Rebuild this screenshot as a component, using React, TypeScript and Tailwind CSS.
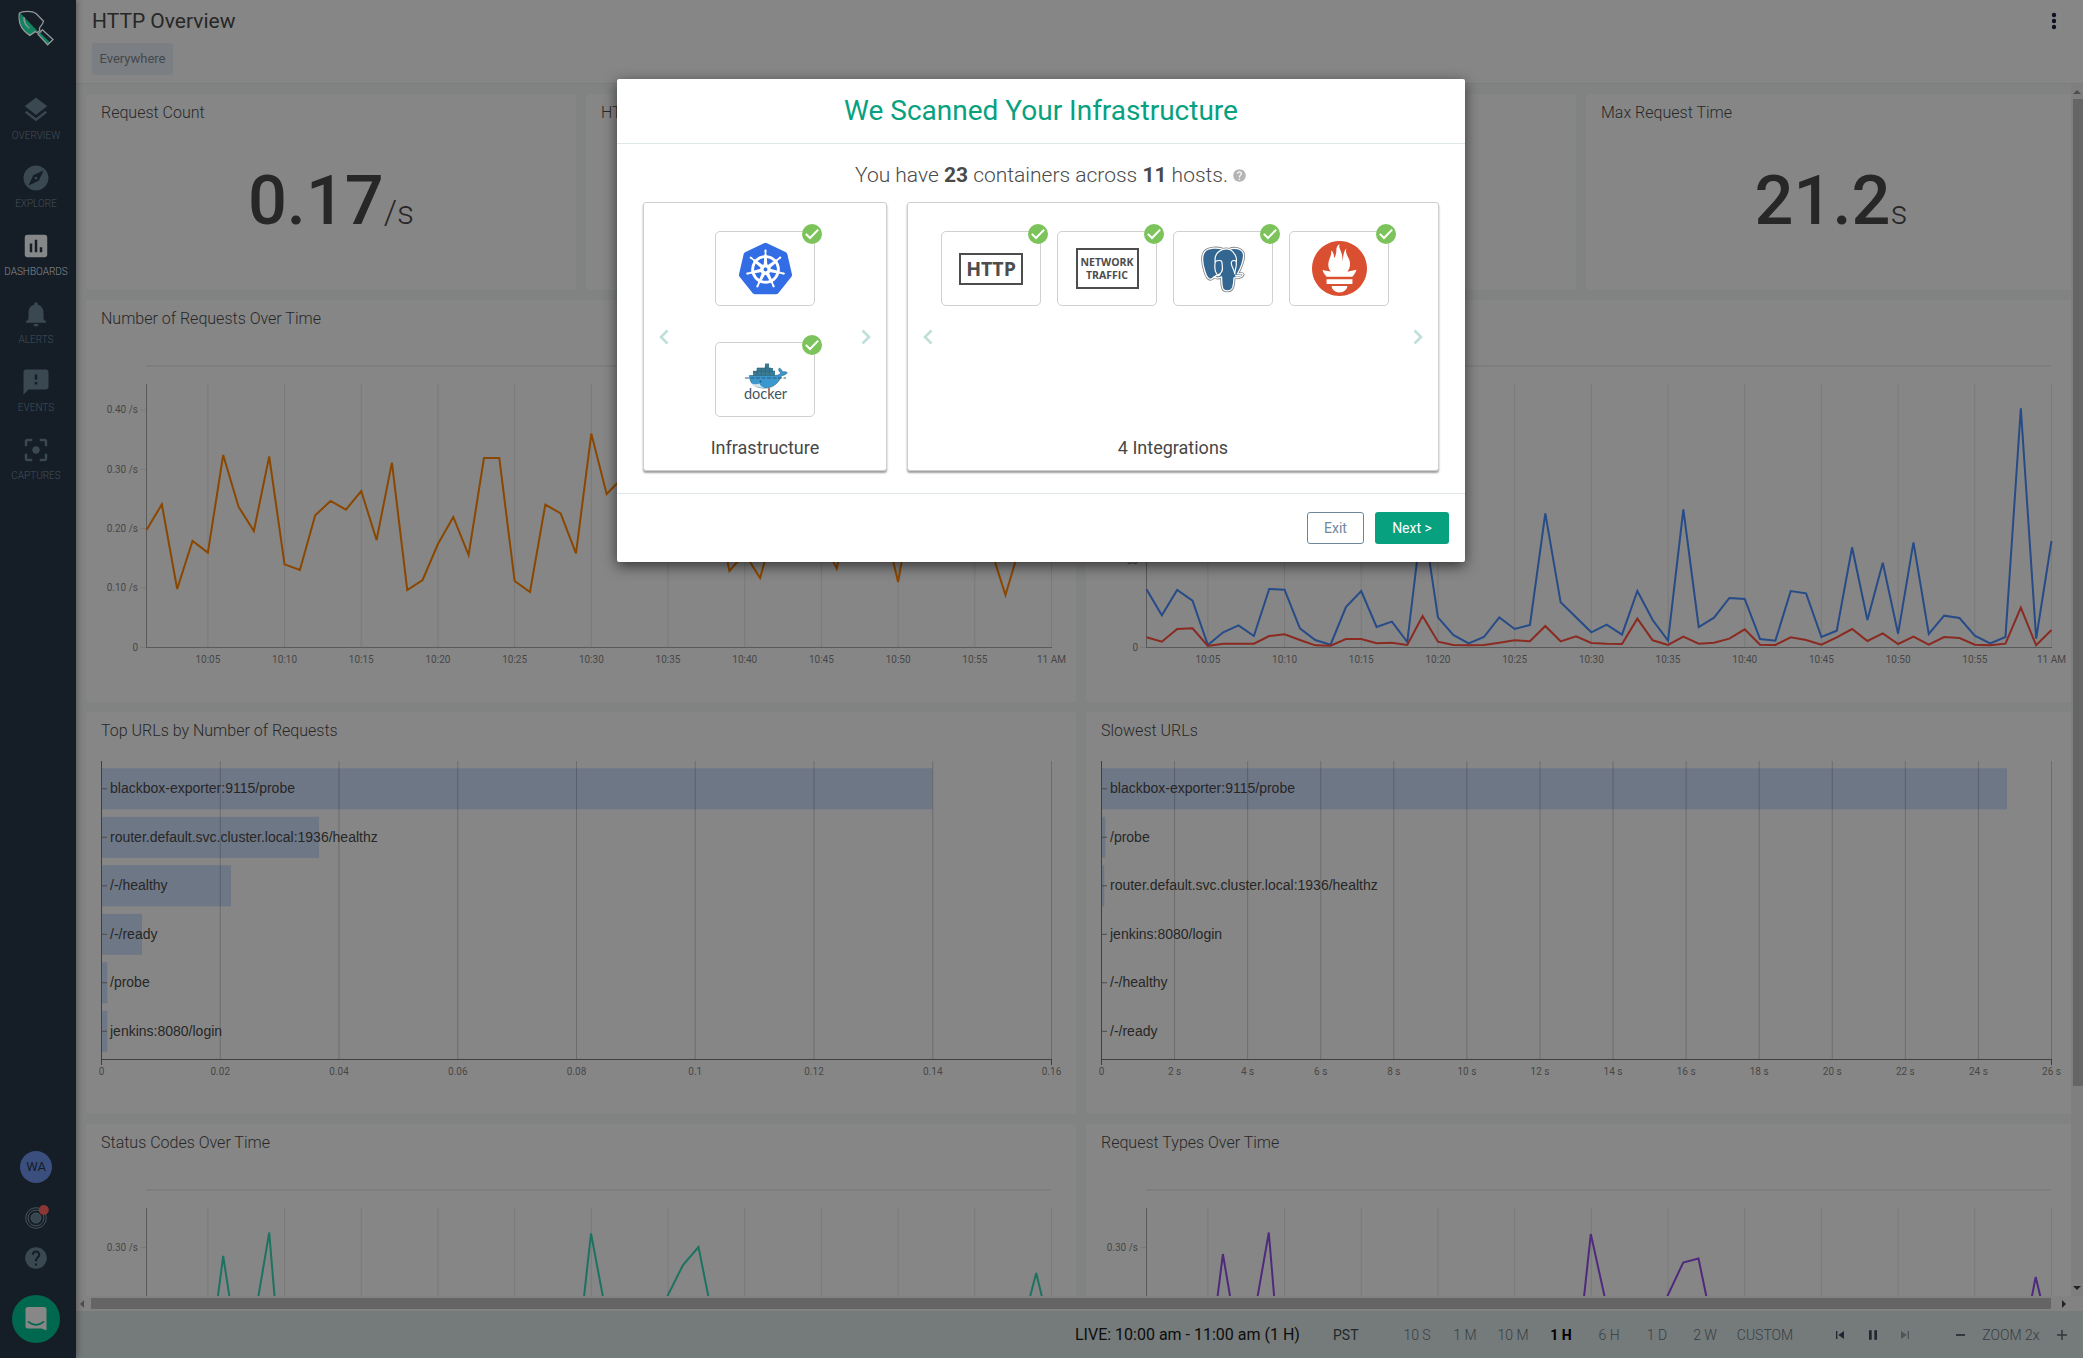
import React from "react";
import {
  MdLayers,
  MdExplore,
  MdAssessment,
  MdNotifications,
  MdFeedback,
  MdFilterCenterFocus,
  MdHelp,
  MdSkipPrevious,
  MdPause,
  MdSkipNext,
} from "react-icons/md";
import { SiKubernetes, SiPrometheus } from "react-icons/si";

/* ---------- chart data (vertical pixel positions inside a card) ---------- */

const STEP = 905 / 59;
const AXIS_X = 60.5;

const requests = [
  540, 463, 717, 573, 608, 315, 470, 543, 319, 643, 660, 496, 453, 479, 423, 570, 338, 720, 690, 582, 501, 615, 324,
  324, 693, 726, 464, 490, 610, 251, 432, 385, 420, 390, 460, 410, 480, 430, 663, 610, 684, 520, 450, 480, 560, 656,
  440, 470, 500, 696, 430, 470, 420, 480, 500, 590, 735, 580, 480, 450,
].map((v) => 50 + v / 3);

const maxTime = [
  718, 796, 720, 752, 885, 847, 826, 858, 717, 719, 835, 870, 884, 771, 723, 831, 815, 876, 493, 802, 855, 880, 861,
  802, 837, 825, 490, 757, 802, 847, 824, 854, 723, 810, 872, 478, 831, 803, 744, 747, 867, 872, 723, 730, 861, 842,
  592, 810, 638, 851, 577, 852, 797, 804, 857, 880, 861, 175, 866, 573,
].map((v) => 50 + v / 3);

const avgTime = [
  862, 875, 837, 835, 888, 881, 881, 881, 858, 853, 870, 886, 887, 867, 867, 880, 878, 885, 798, 875, 885, 886, 885,
  878, 871, 874, 828, 874, 859, 879, 881, 882, 806, 871, 885, 860, 881, 878, 866, 838, 884, 885, 862, 870, 884, 862,
  837, 873, 850, 882, 860, 884, 861, 864, 884, 886, 881, 773, 886, 840,
].map((v) => 50 + v / 3);

const toPoints = (ys: number[]) => ys.map((y, i) => `${(AXIS_X + i * STEP).toFixed(2)},${y.toFixed(2)}`).join(" ");

const timeLabels = ["10:05", "10:10", "10:15", "10:20", "10:25", "10:30", "10:35", "10:40", "10:45", "10:50", "10:55", "11 AM"];

type YTick = { y: number; label: string };

function LineChart({
  yTicks,
  lines,
  showTimes = true,
}: {
  yTicks: YTick[];
  lines: { color: string; points: string }[];
  showTimes?: boolean;
}) {
  return (
    <svg width={990} height={362} viewBox="0 40 990 362" className="block shrink-0">
      <rect x={60} y={65} width={905} height={2} fill="#7e7e7e" />
      {timeLabels.map((t, i) => {
        const x = AXIS_X + (4 + i * 5) * STEP;
        return (
          <g key={t}>
            <line x1={x} x2={x} y1={84} y2={347} stroke="#7a7a7a" />
            {showTimes && (
              <text x={x} y={362.6} textAnchor="middle" fontSize={10} fill="#464646">
                {t}
              </text>
            )}
          </g>
        );
      })}
      {yTicks.map((t) => (
        <g key={t.label}>
          <line x1={54} x2={60} y1={t.y} y2={t.y} stroke="#7a7a7a" />
          <text x={52} y={t.y + 3} textAnchor="end" fontSize={10} fill="#464646">
            {t.label}
          </text>
        </g>
      ))}
      <line x1={60.5} x2={60.5} y1={84} y2={347.5} stroke="#5a5a5a" />
      <line x1={60} x2={966} y1={347.5} y2={347.5} stroke="#5a5a5a" />
      {lines.map((l) => (
        <polyline key={l.color} points={l.points} fill="none" stroke={l.color} strokeWidth={2} strokeLinejoin="miter" />
      ))}
    </svg>
  );
}

function BarChart({ rows, ticks }: { rows: { label: string; width: number }[]; ticks: string[] }) {
  const gap = 950 / (ticks.length - 1);
  return (
    <svg width={990} height={362} viewBox="0 40 990 362" className="block shrink-0">
      {rows.map((r, i) => (
        <rect key={r.label} x={15.5} y={56.3 + i * 48.5} width={r.width} height={41} fill="#6e7786" />
      ))}
      {ticks.map((t, i) => {
        const x = 15.5 + i * gap;
        return (
          <g key={t}>
            {i > 0 && <line x1={x} x2={x} y1={49} y2={347} stroke="#000" strokeOpacity={0.19} />}
            <text x={x} y={362.6} textAnchor="middle" fontSize={10} fill="#464646">
              {t}
            </text>
          </g>
        );
      })}
      <path d="M15.5 49V353M965.5 347V353" stroke="#3f3f3f" fill="none" />
      <line x1={15} x2={966} y1={347.5} y2={347.5} stroke="#3f3f3f" />
      {rows.map((r, i) => (
        <g key={r.label}>
          <line x1={16} x2={21} y1={76.8 + i * 48.5} y2={76.8 + i * 48.5} stroke="#4a4a4a" />
          <text
            x={24}
            y={81.3 + i * 48.5}
            fontSize={14}
            fill="#262626"
            className="[font-family:'Liberation_Sans',Arial,sans-serif]"
          >
            {r.label}
          </text>
        </g>
      ))}
    </svg>
  );
}

function Card({ title, className, children }: { title: string; className: string; children?: React.ReactNode }) {
  return (
    <section className={`flex shrink-0 flex-col overflow-hidden rounded-[2px] bg-[#868686] ${className}`}>
      <h2 className="h-10 shrink-0 whitespace-nowrap pl-[15px] text-[16px] leading-[37px] font-light text-[#282828]">{title}</h2>
      {children}
    </section>
  );
}

function BigNumber({ value, unit }: { value: string; unit: string }) {
  return (
    <div className="flex items-baseline justify-center pt-[27px] leading-[80px] text-[#272727]">
      <span className="text-[68.5px] font-medium">{value}</span>
      <span className="text-[33.5px] font-light">{unit}</span>
    </div>
  );
}

/* ---------- sidebar ---------- */

const nav = [
  { label: "OVERVIEW", Icon: MdLayers },
  { label: "EXPLORE", Icon: MdExplore },
  { label: "DASHBOARDS", Icon: MdAssessment, active: true },
  { label: "ALERTS", Icon: MdNotifications },
  { label: "EVENTS", Icon: MdFeedback },
  { label: "CAPTURES", Icon: MdFilterCenterFocus },
];

function TrowelLogo() {
  return (
    <svg width={38} height={38} viewBox="0 0 38 38" className="ml-[17px] block" fill="none">
      <path d="M3.2 3L22 22.5L19.5 20.8L13 26L7 20.5L3 13Z" fill="#11835f" />
      <path d="M24.6 21.6L35 31L31 35L21.5 25Z" fill="#11835f" />
      <path d="M24.4 22.4L33.600 31" stroke="#151d27" strokeWidth={2.4} />
      <path
        d="M2.3 3.2C5 .9 15 .3 19 3.6L26.5 11.2L25.6 13.5C24.3 16 22.6 17 22.4 18.6L22.8 20.4L20.3 22.6L18.3 21.6L12.7 25.4C6 21 2 15 2.1 8Z"
        stroke="#93989a"
        strokeWidth={1.3}
      />
      <path d="M7 7C6.8 11 8.6 15.5 12.4 18.2" stroke="#93989a" strokeWidth={1.3} />
      <path d="M25.3 19.8L36 29.6L30.6 34.8L21 24.2Z" stroke="#93989a" strokeWidth={1.3} />
    </svg>
  );
}

function Sidebar() {
  return (
    <aside className="z-10 flex h-[1358px] w-[76px] shrink-0 flex-col bg-[#151d27] pt-[10px] shadow-[1px_0_6px_rgba(0,0,0,0.35)]">
      <TrowelLogo />
      <nav className="mt-[46px] flex w-[72px] flex-col">
        {nav.map(({ label, Icon, active }) => (
          <div
            key={label}
            className={`flex h-[68px] flex-col items-center ${active ? "text-[#8b8d90]" : "text-[#3a4852]"}`}
          >
            <Icon size={30} className={`mt-px shrink-0 ${active ? "text-[#868788]" : ""}`} />
            <span className={`mt-[4px] text-[10px] leading-[14px] ${active ? "font-light" : "font-light text-[#42505a]"}`}>
              {label}
            </span>
          </div>
        ))}
      </nav>
      <div className="mt-auto flex w-[72px] flex-col items-center pb-[15px]">
        <div className="flex size-8 items-center justify-center rounded-full bg-[#3b4f7e] text-[13px] text-[#141b29]">WA</div>
        <svg width={26} height={26} viewBox="0 0 26 26" className="mt-[22px] block" fill="none" stroke="#46545d">
          <circle cx={13} cy={13} r={10.3} />
          <circle cx={13} cy={13} r={7.9} />
          <circle cx={13} cy={13} r={5} fill="#38464f" />
          <circle cx={20.8} cy={5} r={5} fill="#8a3632" stroke="none" />
        </svg>
        <MdHelp size={26} className="mt-[14px] text-[#3a4852]" />
        <div className="mt-[24px] flex size-12 items-center justify-center rounded-full bg-[#00684e]">
          <svg width={22} height={24} viewBox="0 0 22 24" className="block">
            <path d="M3 0H19Q21.5 0 21.5 2.5V23.5L16.5 21.5H3Q.5 21.500.5 19V2.500Q.5 0 3 0Z" fill="#878787" />
            <path d="M3.500 14.800Q11 21 18.500 14.800" stroke="#00684e" strokeWidth={1.7} fill="none" strokeLinecap="round" />
          </svg>
        </div>
      </div>
    </aside>
  );
}

/* ---------- bottom bar ---------- */

const ranges = ["10 S", "1 M", "10 M", "1 H", "6 H", "1 D", "2 W", "CUSTOM"];

function BottomBar() {
  return (
    <footer className="flex h-[47px] shrink-0 items-center bg-[#757a7a] pt-px pl-[999px] text-[14px] whitespace-nowrap text-[#363f46]">
      <span className="w-[223px] text-[16px] text-[#0d0d0d]">LIVE: 10:00 am - 11:00 am (1 H)</span>
      <span className="ml-[35px] w-[25px] text-[#22282c]">PST</span>
      <div className="ml-[35px] flex w-[408px]">
        {ranges.map((r) => (
          <span
            key={r}
            className={`flex justify-center ${r === "CUSTOM" ? "w-[72px]" : "w-12"} ${r === "1 H" ? "font-bold text-black" : "font-light"}`}
          >
            {r}
          </span>
        ))}
      </div>
      <div className="ml-[31px] flex w-[81px] items-center justify-between text-[16px] text-[#1d2730]">
        <MdSkipPrevious />
        <MdPause />
        <MdSkipNext className="text-[#4d555a]" />
      </div>
      <div className="ml-[43px] flex w-[111px] items-center justify-between">
        <span className="h-[1.5px] w-[9px] bg-[#30383e]" />
        <span className="font-light">ZOOM 2x</span>
        <svg width={10} height={10} viewBox="0 0 10 10" stroke="#30383e" strokeWidth={1.5}>
          <path d="M0 5H10M5 0V10" />
        </svg>
      </div>
    </footer>
  );
}

/* ---------- modal ---------- */

function CheckBadge() {
  return (
    <svg width={20} height={20} viewBox="0 0 20 20" className="absolute -top-2 -right-2 block">
      <circle cx={10} cy={10} r={10} fill="#7dc35b" />
      <path d="M3.800 9.900L8 14L16.200 5.600" fill="none" stroke="#fff" strokeWidth={2} />
    </svg>
  );
}

function Tile({ children }: { children: React.ReactNode }) {
  return (
    <div className="relative flex h-[75px] w-[100px] items-center justify-center rounded-[5px] border border-[#cfd0d1] bg-white">
      {children}
      <CheckBadge />
    </div>
  );
}

function Chevron({ right }: { right?: boolean }) {
  return (
    <svg width={10} height={16} viewBox="0 0 10 16" className={`block shrink-0 ${right ? "-scale-x-100" : ""}`}>
      <path d="M8.500 1.500L2 8L8.500 14.500" fill="none" stroke="#bfe0da" strokeWidth={2.6} />
    </svg>
  );
}

function DockerLogo() {
  return (
    <div className="flex flex-col items-center pt-[5px] pl-px">
      <svg width={44} height={26} viewBox="0 0 44 26" className="block">
        <path d="M9 8H13V5H21V.500H25V5H29V8H31V13H9Z" fill="#3b7c93" />
        <path d="M9 8.200H31M13 5V13M17.200 5V13M21.300 3V13M25.500 5V13M13 5H27" stroke="#2b5f73" strokeWidth={0.6} fill="none" />
        <path
          d="M5.500 12.500H31C34 12.500 36 11.500 36.800 9.800C34.500 8.500 34.500 6.500 35.300 5C37 6 38 7.200 38.200 8.800C40 8.500 42 8.700 43.300 9.600C42 11.600 39.800 12.400 37.600 12.600C34.500 21 28 25.300 20 25C11.500 25 5.500 21 5.500 12.500Z"
          fill="#3a98cf"
          stroke="#2d6a88"
          strokeWidth={0.7}
        />
        <path d="M6.500 20C10 21.500 13.500 21.500 15.500 20.500C16 22.500 18 24 20.500 24.700C13.500 25 9 23 6.500 20Z" fill="#d5e3ea" />
        <path d="M1 15H42" stroke="#2d5f78" strokeWidth={1} strokeDasharray="4 1.500" />
        <circle cx={16.500} cy={18.500} r={0.900} fill="#2b4f60" />
      </svg>
      <span className="mt-[-3px] text-[14.5px] leading-[16px] text-[#42565f] [font-family:Lato,sans-serif]">docker</span>
    </div>
  );
}

function PostgresLogo() {
  const body =
    "M23 2.500C18 .500 8 .200 4.200 5C.800 9.500 2 17 4.500 25C6 30.500 8.500 34 11.500 32.500C12.500 32 13 31.500 13.800 30.500C16 32 19.500 31.500 21.500 30.500C21.800 34 21.600 38 22.500 41.500C23.800 46 31 46 33 41C34 38 34 34.500 34.300 31.500C38 31.500 43 30.500 43.500 28C43.200 26.500 40 27.800 37.800 27.300C41 22 44.500 13 44 7.500C42.500 1 33.500 .300 29.500 2.500C27.500 1.800 25 1.800 23 2.500Z";
  return (
    <svg width={46} height={48} viewBox="-.5 -1 47 49" className="mt-[3px] block" strokeLinejoin="round">
      <path d={body} fill="#fff" stroke="#868686" strokeWidth={3} />
      <path d={body} fill="#336791" stroke="#fff" strokeWidth={1.300} />
      <path d="M15 29.500C17 27.800 19 27.500 20.800 27.500C20.500 29.500 18 30.500 15 29.500ZM35.500 28.200C38 28.800 41 28.600 43 28.200C41 30.200 37.500 30.800 35.500 30.200Z" fill="#fff" />
      <g fill="none" stroke="#fff" strokeWidth={1.200} strokeLinecap="round">
        <path d="M22 3C16 5 14.500 10 15 15C14.800 20 13.500 23 16.500 27.500" />
        <path d="M30 2.500C35 5 37.500 11 36.500 15" />
        <path d="M15 15C18 13 22 13.500 22 16C22 20 23.500 22 21.500 25.500C20 28.500 17 28 14 30.500" />
        <path d="M36.500 14.500C34 13 31 14 31.500 17C32 21 34.500 23 35 27.200" />
        <path d="M36.500 15C37.500 20 35 23.500 35 27.200" />
      </g>
    </svg>
  );
}

function Panel({ label, className, children }: { label: string; className: string; children: React.ReactNode }) {
  return (
    <div
      className={`flex h-[269px] shrink-0 flex-col rounded-[3px] border border-[#cdcfcf] bg-white shadow-[0_2px_2px_rgba(0,0,0,0.38)] ${className}`}
    >
      <div className="flex h-[232px] w-full justify-between px-[15px]">
        <div className="flex pt-[126px]">
          <Chevron />
        </div>
        {children}
        <div className="flex pt-[126px]">
          <Chevron right />
        </div>
      </div>
      <div className="text-center text-[18px] leading-[26px] text-[#474747]">{label}</div>
    </div>
  );
}

function Modal() {
  return (
    <div className="absolute top-[79px] left-[617px] z-20 flex h-[483px] w-[848px] flex-col rounded-[2px] bg-white shadow-[0_4px_14px_rgba(0,0,0,0.6)]">
      <div className="h-[65px] border-b border-[#dde8e7] text-center text-[28px] leading-[64px] text-[#07a17f]">
        We Scanned Your Infrastructure
      </div>
      <div className="flex h-[350px] flex-col border-b border-[#dde8e7] px-[26px]">
        <div className="flex h-[58px] items-center justify-center pt-[6px] text-[21px] font-light text-[#4a4a4a]">
          <span className="whitespace-pre">
            You have <b className="font-bold">23</b> containers across <b className="font-bold">11</b> hosts.
          </span>
          <MdHelp size={15} className="-mt-0.5 -mr-5 ml-[4px] text-[#b4b4b4]" />
        </div>
        <div className="flex gap-5">
          <Panel label="Infrastructure" className="w-[244px]">
            <div className="flex flex-col gap-9 pt-[28px]">
              <Tile>
                <SiKubernetes size={53} color="#326de6" />
              </Tile>
              <Tile>
                <DockerLogo />
              </Tile>
            </div>
          </Panel>
          <Panel label="4 Integrations" className="w-[532px]">
            <div className="flex gap-4 pt-[28px] pr-4">
              <Tile>
                <span className="flex h-8 w-16 items-center justify-center border-2 border-[#4d4d4d] text-[19.5px] leading-none font-bold text-[#4d4d4d] [font-family:'Open_Sans',sans-serif]">
                  HTTP
                </span>
              </Tile>
              <Tile>
                <span className="flex h-[41px] w-[63px] items-center justify-center border-2 border-[#4d4d4d] text-center text-[10.5px] leading-[12.5px] font-bold text-[#4d4d4d] [font-family:'Open_Sans',sans-serif]">
                  NETWORK
                  <br />
                  TRAFFIC
                </span>
              </Tile>
              <Tile>
                <PostgresLogo />
              </Tile>
              <Tile>
                <SiPrometheus size={55} color="#db4f31" />
              </Tile>
            </div>
          </Panel>
        </div>
      </div>
      <div className="flex justify-end gap-[11px] pt-[18px] pr-[16px] text-[14px]">
        <button className="h-8 w-[57px] rounded-[3px] border border-[#6f8796] text-[#71889a]">Exit</button>
        <button className="h-8 w-[74px] rounded-[3px] bg-[#07a17f] text-white">Next &gt;</button>
      </div>
    </div>
  );
}

/* ---------- page ---------- */

const topUrls = [
  { label: "blackbox-exporter:9115/probe", width: 831 },
  { label: "router.default.svc.cluster.local:1936/healthz", width: 217.5 },
  { label: "/-/healthy", width: 129.5 },
  { label: "/-/ready", width: 40.5 },
  { label: "/probe", width: 5.8 },
  { label: "jenkins:8080/login", width: 5.8 },
];

const slowUrls = [
  { label: "blackbox-exporter:9115/probe", width: 905.5 },
  { label: "/probe", width: 3.8 },
  { label: "router.default.svc.cluster.local:1936/healthz", width: 2.8 },
  { label: "jenkins:8080/login", width: 0 },
  { label: "/-/healthy", width: 0 },
  { label: "/-/ready", width: 0 },
];

const secondsTicks = ["0", "2 s", "4 s", "6 s", "8 s", "10 s", "12 s", "14 s", "16 s", "18 s", "20 s", "22 s", "24 s", "26 s"];

export default function App() {
  return (
    <div className="relative flex h-[1358px] w-[2083px] overflow-hidden bg-[#818382] [font-family:Roboto,sans-serif]">
      <Sidebar />
      <main className="flex h-[1358px] w-[2007px] flex-col">
        <header className="flex h-[84px] shrink-0 justify-between border-b border-[#7b7d7d] bg-[#868686] pl-4">
          <div className="flex flex-col items-start">
            <h1 className="h-[43px] text-[21px] leading-[42px] text-[#272727]">HTTP Overview</h1>
            <span className="flex h-8 w-[81px] items-center justify-center rounded-[3px] bg-[#7b7e82] text-[13px] text-[#43484d]">
              Everywhere
            </span>
          </div>
          <svg width={6} height={20} viewBox="0 0 6 20" className="mt-[11px] mr-[26px] block" fill="#0d1124">
            <circle cx={3} cy={4} r={2.200} />
            <circle cx={3} cy={10} r={2.200} />
            <circle cx={3} cy={16} r={2.200} />
          </svg>
        </header>
        <div className="flex h-[1212px] shrink-0">
          <div className="flex w-[1995px] shrink-0 flex-col gap-[10px] overflow-hidden pt-[10px] pl-[10px]">
            <div className="flex gap-[10px]">
              <Card title="Request Count" className="h-[196px] w-[490px]">
                <BigNumber value="0.17" unit="/s" />
              </Card>
              <Card title="HTTP" className="h-[196px] w-[490px]" />
              <Card title="" className="h-[196px] w-[490px]" />
              <Card title="Max Request Time" className="h-[196px] w-[490px]">
                <BigNumber value="21.2" unit="s" />
              </Card>
            </div>
            <div className="flex gap-[10px]">
              <Card title="Number of Requests Over Time" className="h-[402px] w-[990px]">
                <LineChart
                  yTicks={[
                    { y: 110, label: "0.40 /s" },
                    { y: 169.500, label: "0.30 /s" },
                    { y: 228.500, label: "0.20 /s" },
                    { y: 288, label: "0.10 /s" },
                    { y: 347.500, label: "0" },
                  ]}
                  lines={[{ color: "#8a4700", points: toPoints(requests) }]}
                />
              </Card>
              <Card title="" className="h-[402px] w-[990px]">
                <LineChart
                  yTicks={[
                    { y: 260.500, label: "50" },
                    { y: 347.500, label: "0" },
                  ]}
                  lines={[
                    { color: "#264b87", points: toPoints(maxTime) },
                    { color: "#8a2a20", points: toPoints(avgTime) },
                  ]}
                />
              </Card>
            </div>
            <div className="flex gap-[10px]">
              <Card title="Top URLs by Number of Requests" className="h-[402px] w-[990px]">
                <BarChart rows={topUrls} ticks={["0", "0.02", "0.04", "0.06", "0.08", "0.1", "0.12", "0.14", "0.16"]} />
              </Card>
              <Card title="Slowest URLs" className="h-[402px] w-[990px]">
                <BarChart rows={slowUrls} ticks={secondsTicks} />
              </Card>
            </div>
            <div className="flex gap-[10px]">
              <Card title="Status Codes Over Time" className="h-[402px] w-[990px]">
                <LineChart
                  showTimes={false}
                  yTicks={[{ y: 123.500, label: "0.30 /s" }]}
                  lines={[
                    {
                      color: "#1c7360",
                      points:
                        "131.800,173 137.200,132 143.500,173 172.300,173 183.200,108.500 188.600,173 498,173 505,109.500 517,173 581,173 597,141 612.500,123 622.500,173 944,173 950.200,149 956,173",
                    },
                  ]}
                />
              </Card>
              <Card title="Request Types Over Time" className="h-[402px] w-[990px]">
                <LineChart
                  showTimes={false}
                  yTicks={[{ y: 123.500, label: "0.30 /s" }]}
                  lines={[
                    {
                      color: "#4f2a7c",
                      points:
                        "131.500,173 136.900,130 144.200,173 171.500,173 182.800,108.500 188.200,173 498,173 504.800,110 518.700,173 581,173 597.200,138.500 612.500,134.500 620.500,173 945.800,173 949.700,153 954.500,173",
                    },
                  ]}
                />
              </Card>
            </div>
          </div>
          <div className="flex w-3 shrink-0 flex-col items-center bg-[#7f7f7f]">
            <div className="mt-[6px] h-0 w-0 border-x-[4px] border-b-[4px] border-x-transparent border-b-[#4e4e4e]" />
            <div className="mt-[5px] h-[987px] w-[10px] self-end bg-[#656565]" />
            <div className="mt-auto mb-[6px] h-0 w-0 border-x-[4px] border-t-[4px] border-x-transparent border-t-[#222]" />
          </div>
        </div>
        <div className="flex h-[15px] shrink-0 items-center bg-[#828282]">
          <div className="ml-[4px] h-0 w-0 border-y-[4px] border-r-[4px] border-y-transparent border-r-[#4e4e4e]" />
          <div className="ml-[7px] h-[11px] w-[1960px] bg-[#656565]" />
          <div className="ml-[11px] h-0 w-0 border-y-[4px] border-l-[4px] border-y-transparent border-l-[#222]" />
        </div>
        <BottomBar />
      </main>
      <Modal />
    </div>
  );
}
